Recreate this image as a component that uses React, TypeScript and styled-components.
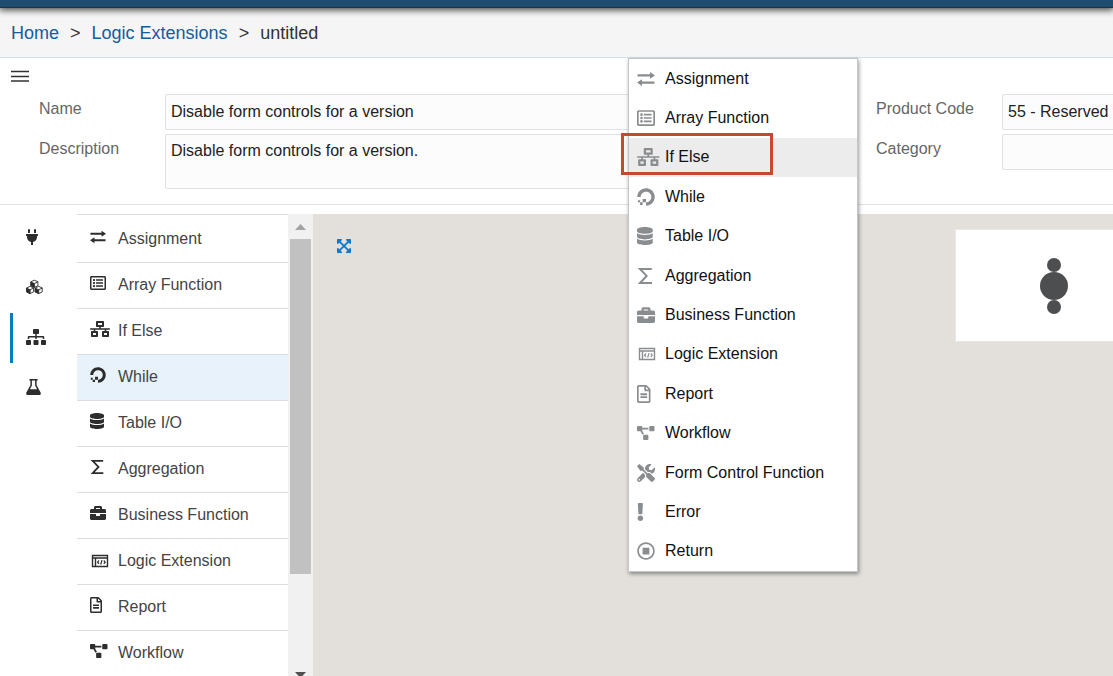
import React from 'react';
import styled, { createGlobalStyle, css } from 'styled-components';
import {
  FaBriefcase,
  FaDatabase,
  FaDigitalOcean,
  FaExclamation,
  FaExpandArrowsAlt,
  FaNetworkWired,
  FaPlug,
  FaProjectDiagram,
  FaRegFileAlt,
  FaRegListAlt,
  FaRegStopCircle,
  FaSitemap,
  FaTools,
} from 'react-icons/fa';

const GlobalStyle = createGlobalStyle`
  * { box-sizing: border-box; }
  body {
    margin: 0;
    background: #fff;
    color: #333;
    font: 16px/20px "Liberation Sans", Arial, sans-serif;
  }
  button, input, textarea { font: inherit; color: inherit; }
`;

const Page = styled.div`
  position: relative;
  display: flex;
  flex-direction: column;
  height: 100vh;
  overflow: hidden;
`;

const TopBar = styled.header`
  position: relative;
  flex: none;
  height: 8px;
  background: #1f4d70;
  border-bottom: 1px solid #1d3343;
  box-shadow: 0 1px 7px 1px rgba(0, 0, 0, 0.75);
`;

const Breadcrumbs = styled.nav`
  display: flex;
  flex: none;
  align-items: center;
  gap: 11px;
  height: 50px;
  padding: 0 11px;
  background: #f5f5f5;
  border-bottom: 1px solid #d6dfe6;
  font-size: 18px;
  line-height: 20px;
`;

const Crumb = styled.a`
  color: #145c9e;
  text-decoration: none;
`;

const Details = styled.section`
  flex: none;
  padding: 12px 0 15px 11px;
  border-bottom: 1px solid #e0e0e0;
`;

const MenuButton = styled.button`
  display: block;
  width: 18px;
  height: 12px;
  padding: 0;
  border: 0;
  background: none;
  svg { display: block; }
`;

const Form = styled.form`
  display: flex;
  gap: 39px;
  margin: 12px -129px 0 28px;
`;

const FieldGroup = styled.div<{ $fixed?: boolean }>`
  display: grid;
  grid-template-columns: 126px minmax(0, 1fr);
  row-gap: 4px;
  align-content: start;
  flex: ${(p) => (p.$fixed ? '0 0 366px' : '1 1 0')};
`;

const Label = styled.label`
  padding-top: 5px;
  color: #666;
`;

const fieldLook = css`
  width: 100%;
  padding: 6px 5px;
  border: 1px solid #e1e1e1;
  border-radius: 2px;
  background: #fcfcfc;
  color: #222;
  outline: 0;
`;

const TextInput = styled.input`
  ${fieldLook}
  height: 36px;
`;

const TextArea = styled.textarea`
  ${fieldLook}
  display: block;
  height: 55px;
  resize: none;
`;

const Workspace = styled.main`
  display: flex;
  flex: 1;
  min-height: 0;
  padding-top: 9px;
`;

const Rail = styled.nav`
  flex: none;
  width: 77px;
  margin-top: -1px;
  padding-left: 10px;
`;

const RailButton = styled.button<{ $active?: boolean }>`
  display: flex;
  align-items: center;
  width: 57px;
  height: 50px;
  padding: 0 0 2px 13px;
  border: 0;
  border-left: 3px solid ${(p) => (p.$active ? '#077dbf' : 'transparent')};
  background: none;
  color: #2d2d2d;
  svg { width: 24px; height: 16px; }
`;

const Palette = styled.ul`
  flex: none;
  width: 211px;
  margin: 0;
  padding: 2px 0 0;
  border-top: 1px solid #dcdcdc;
  list-style: none;
  overflow: hidden;
`;

const PaletteButton = styled.button<{ $active?: boolean }>`
  display: flex;
  align-items: center;
  width: 100%;
  height: 46px;
  padding: 0 0 1px 13px;
  border: 0;
  border-bottom: 1px solid #dcdcdc;
  background: ${(p) => (p.$active ? '#e7f2fa' : '#fff')};
  color: #444;
  text-align: left;
`;

const IconSlot = styled.span<{ $raised?: boolean; $size: number; $color: string }>`
  display: flex;
  flex: none;
  align-items: center;
  width: 28px;
  height: 24px;
  padding-bottom: ${(p) => (p.$raised ? 4 : 0)}px;
  color: ${(p) => p.$color};
  svg {
    flex: none;
    width: 24px;
    height: ${(p) => p.$size}px;
  }
  svg.compact { height: 14px; }
`;

const ScrollTrack = styled.div`
  display: flex;
  flex: none;
  flex-direction: column;
  align-items: center;
  width: 25px;
  height: 466px;
  background: #f1f1f1;
`;

const ScrollArrow = styled.svg`
  flex: none;
  width: 25px;
  height: 25px;
`;

const ScrollThumb = styled.div`
  width: 21px;
  height: 335px;
  margin-bottom: auto;
  background: #c1c1c1;
`;

const Canvas = styled.section`
  display: flex;
  flex: 1;
  align-items: flex-start;
  justify-content: space-between;
  min-width: 0;
  padding: 15px 0 0 24px;
  background: #e3e0db;
  overflow: hidden;
`;

const FitButton = styled.button`
  display: flex;
  margin-top: 9px;
  padding: 0;
  border: 0;
  background: none;
  color: #0b78d4;
  svg { width: 16px; height: 16px; }
`;

const MiniMap = styled.div`
  display: flex;
  align-items: center;
  justify-content: center;
  width: 197px;
  height: 113px;
  margin-right: -39px;
  border: 1px solid #e9e8e5;
  background: #fff;
`;

const ContextMenu = styled.div`
  position: absolute;
  top: 58px;
  left: 628px;
  display: grid;
  grid-auto-rows: 1fr;
  width: 230px;
  height: 514px;
  border: 1px solid #c3c7ca;
  background: #fff;
  box-shadow: 1px 2px 4px rgba(0, 0, 0, 0.4);
`;

const ContextItem = styled.button<{ $active?: boolean }>`
  position: relative;
  display: flex;
  align-items: center;
  min-height: 0;
  padding: 0 8px;
  border: 0;
  background: ${(p) => (p.$active ? '#ececec' : '#fff')};
  color: #111;
  text-align: left;
`;

const Highlight = styled.span`
  position: absolute;
  top: -5px;
  left: -8px;
  width: 152px;
  height: 42px;
  border: 3px solid #c74634;
`;

/* Glyphs of different widths all start at the left edge of their slot. */
const start = { preserveAspectRatio: 'xMinYMid' };

const ArrowsIcon = () => (
  <svg viewBox="0 0 18 18" fill="currentColor" {...start}>
    <path d="M.5 4.200h12.500V2L18 5.400l-5 3.400V6.600H.5zM17.500 11.400H5V9.200L0 12.600l5 3.400v-2.200h12.500z" />
  </svg>
);

const SigmaIcon = () => (
  <svg viewBox="0 0 16 18" fill="none" stroke="currentColor" strokeWidth="2" {...start}>
    <path d="M14.800 2H3l6.600 6.900L3 16h12" />
  </svg>
);

const LogicIcon = () => (
  <svg className="compact" viewBox="0 0 18 14" fill="none" stroke="currentColor" {...start}>
    <path strokeWidth="1.400" d="M2.500 1.500h15v11h-15zM2.500 4h15M5.500 4v8.500" />
    <path strokeWidth="1.200" d="M9 6.500L7.600 8.200 9 9.900M13.800 6.500l1.400 1.700-1.400 1.700M12 6.100l-1.300 4.400" />
  </svg>
);

const CubesIcon = () => {
  const cubes = [[4.4, 0.8], [0.1, 7], [8.7, 7]];
  return (
    <svg viewBox="0 0 17 16" fill="#fff" stroke="currentColor" strokeWidth="0.9" strokeLinejoin="round" {...start}>
      {cubes.map(([x, y]) => (
        <g key={x} transform={`translate(${x} ${y})`}>
          <path d="M4 .4L7.500 1.900v4L4 7.600.5 5.900v-4z" />
          <path fill="currentColor" d="M.5 2.200L4 3.700v3.900L.5 5.900z" />
          <path fill="none" d="M4 3.700L7.500 2.100" />
        </g>
      ))}
    </svg>
  );
};

const FlaskIcon = () => (
  <svg viewBox="0 0 15 16" fill="currentColor" {...start}>
    <path
      fillRule="evenodd"
      d="M3.400 0h8.200v1.500h-1v4.700l3.900 7.100c.7 1.300.1 2.700-1.400 2.700H1.900C.4 16-.2 14.600.5 13.300l3.900-7.100V1.500h-1zM5.900 1.500v5.100L3.900 10.200h7.200L9.100 6.600V1.500z"
    />
  </svg>
);

type Entry = { name: string; icon: React.ReactNode };

const functions: Entry[] = [
  { name: 'Assignment', icon: <ArrowsIcon /> },
  { name: 'Array Function', icon: <FaRegListAlt {...start} /> },
  { name: 'If Else', icon: <FaNetworkWired {...start} /> },
  { name: 'While', icon: <FaDigitalOcean {...start} /> },
  { name: 'Table I/O', icon: <FaDatabase {...start} /> },
  { name: 'Aggregation', icon: <SigmaIcon /> },
  { name: 'Business Function', icon: <FaBriefcase {...start} /> },
  { name: 'Logic Extension', icon: <LogicIcon /> },
  { name: 'Report', icon: <FaRegFileAlt {...start} /> },
  { name: 'Workflow', icon: <FaProjectDiagram className="compact" {...start} /> },
  { name: 'Form Control Function', icon: <FaTools {...start} /> },
  { name: 'Error', icon: <FaExclamation {...start} /> },
  { name: 'Return', icon: <FaRegStopCircle {...start} /> },
];

export default function App() {
  return (
    <Page>
      <GlobalStyle />
      <TopBar />
      <Breadcrumbs aria-label="Breadcrumb">
        <Crumb href="#home">Home</Crumb>
        <span>&gt;</span>
        <Crumb href="#logic-extensions">Logic Extensions</Crumb>
        <span>&gt;</span>
        <span>untitled</span>
      </Breadcrumbs>

      <Details>
        <MenuButton aria-label="Toggle menu">
          <svg width="18" height="12" stroke="#333" strokeWidth="1.300">
            <path d="M0 1.500h18M0 6.500h18M0 11h18" />
          </svg>
        </MenuButton>
        <Form>
          <FieldGroup>
            <Label htmlFor="name">Name</Label>
            <TextInput id="name" defaultValue="Disable form controls for a version" />
            <Label htmlFor="description">Description</Label>
            <TextArea id="description" defaultValue="Disable form controls for a version." />
          </FieldGroup>
          <FieldGroup $fixed>
            <Label htmlFor="product">Product Code</Label>
            <TextInput id="product" defaultValue="55 - Reserved for Clients" />
            <Label htmlFor="category">Category</Label>
            <TextInput id="category" />
          </FieldGroup>
        </Form>
      </Details>

      <Workspace>
        <Rail aria-label="Panels">
          <RailButton aria-label="Connections"><FaPlug {...start} /></RailButton>
          <RailButton aria-label="Objects"><CubesIcon /></RailButton>
          <RailButton aria-label="Functions" $active><FaSitemap {...start} /></RailButton>
          <RailButton aria-label="Test"><FlaskIcon /></RailButton>
        </Rail>
        <Palette>
          {functions.slice(0, 10).map(({ name, icon }) => (
            <li key={name}>
              <PaletteButton $active={name === 'While'}>
                <IconSlot $raised={name !== 'Logic Extension'} $size={16} $color="#2d2d2d">{icon}</IconSlot>
                {name}
              </PaletteButton>
            </li>
          ))}
        </Palette>
        <ScrollTrack aria-hidden="true">
          <ScrollArrow viewBox="0 0 25 25"><path fill="#a3a3a3" d="M7 16l5.500-6 5.500 6z" /></ScrollArrow>
          <ScrollThumb />
          <ScrollArrow viewBox="0 0 25 25"><path fill="#505050" d="M7 17l5.500 6 5.500-6z" /></ScrollArrow>
        </ScrollTrack>
        <Canvas>
          <FitButton aria-label="Fit to screen"><FaExpandArrowsAlt {...start} /></FitButton>
          <MiniMap>
            <svg width="28" height="56" fill="#4d4e50">
              <circle cx="14" cy="7" r="7" />
              <circle cx="14" cy="28" r="14" />
              <circle cx="14" cy="49" r="7" />
            </svg>
          </MiniMap>
        </Canvas>
      </Workspace>

      <ContextMenu role="menu">
        {functions.map(({ name, icon }) => (
          <ContextItem key={name} role="menuitem" $active={name === 'If Else'}>
            <IconSlot $size={18} $color="#8a8d90">{icon}</IconSlot>
            {name}
            {name === 'If Else' && <Highlight />}
          </ContextItem>
        ))}
      </ContextMenu>
    </Page>
  );
}
